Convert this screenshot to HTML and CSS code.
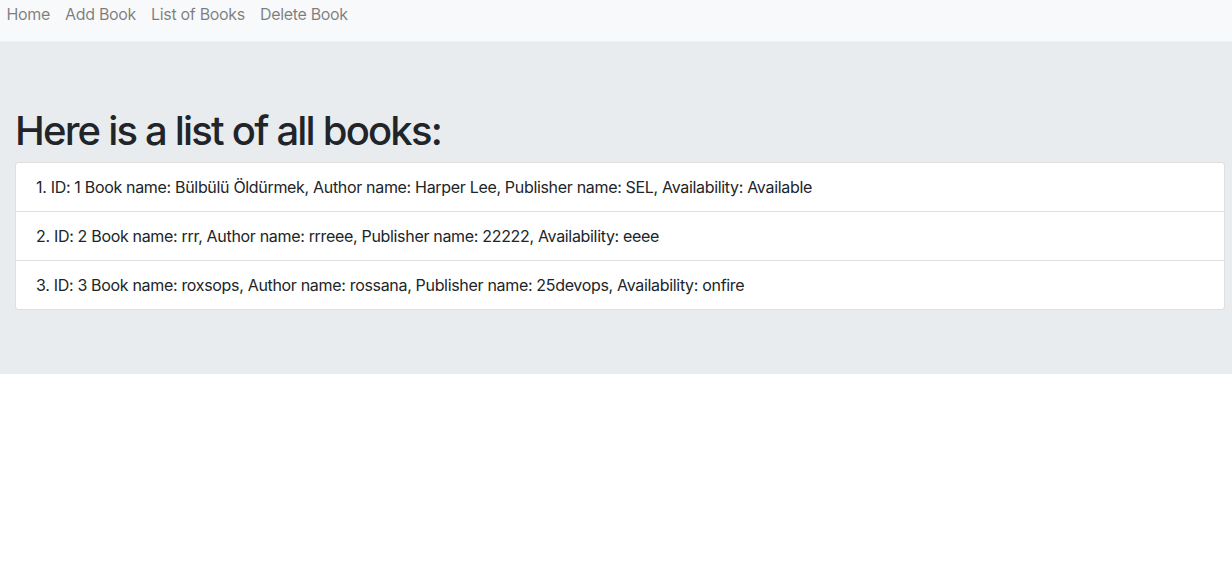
FILE: index.html
```html
<!DOCTYPE html>
<html lang="en">
<head>
<meta charset="utf-8">
<title>Books</title>
<link rel="stylesheet" href="styles.css">
</head>
<body>
<nav class="navbar">
  <ul class="nav-list">
    <li><a class="nav-link" href="#">Home</a></li>
    <li><a class="nav-link" href="#">Add Book</a></li>
    <li><a class="nav-link" href="#">List of Books</a></li>
    <li><a class="nav-link" href="#">Delete Book</a></li>
  </ul>
</nav>
<main class="jumbotron">
  <h1 class="title">Here is a list of all books:</h1>
  <ol class="list-group">
    <li class="list-item">ID: 1 Book name: Bülbülü Öldürmek, Author name: Harper Lee, Publisher name: SEL, Availability: Available</li>
    <li class="list-item">ID: 2 Book name: rrr, Author name: rrreee, Publisher name: 22222, Availability: eeee</li>
    <li class="list-item">ID: 3 Book name: roxsops, Author name: rossana, Publisher name: 25devops, Availability: onfire</li>
  </ol>
</main>
</body>
</html>
```

FILE: styles.css
```css
* { box-sizing: border-box; }
html, body {
  margin: 0;
  padding: 0;
}
body {
  font-family: Inter, "Liberation Sans", sans-serif;
  font-size: 16px;
  line-height: 24px;
  letter-spacing: -0.32px;
  color: #212529;
  background: #fff;
}
.navbar {
  background: #f8f9fa;
  height: 42px;
  border-bottom: 1px solid #eef0f2;
}
.nav-list {
  list-style: none;
  margin: 0 0 0 -1px;
  padding: 2px 0 0 0;
  display: flex;
}
.nav-link {
  display: block;
  padding: 0 7.5px;
  color: rgba(0, 0, 0, 0.5);
  text-decoration: none;
}
.jumbotron {
  background: #e9ecef;
  padding: 65px 7px 64px 15px;
}
.title {
  margin: 0 0 7px 0;
  font-size: 40px;
  line-height: 48px;
  font-weight: 500;
  letter-spacing: -1.8px;
}
.list-group {
  margin: 0;
  padding: 0;
  list-style: none;
  counter-reset: item;
  background: #fff;
  border: 1px solid rgba(0, 0, 0, 0.125);
  border-radius: 4px;
}
.list-item {
  counter-increment: item;
  padding: 12px 20px;
  border-top: 1px solid rgba(0, 0, 0, 0.125);
}
.list-item:first-child { border-top: 0; }
.list-item::before { content: counter(item) ". "; }
```
